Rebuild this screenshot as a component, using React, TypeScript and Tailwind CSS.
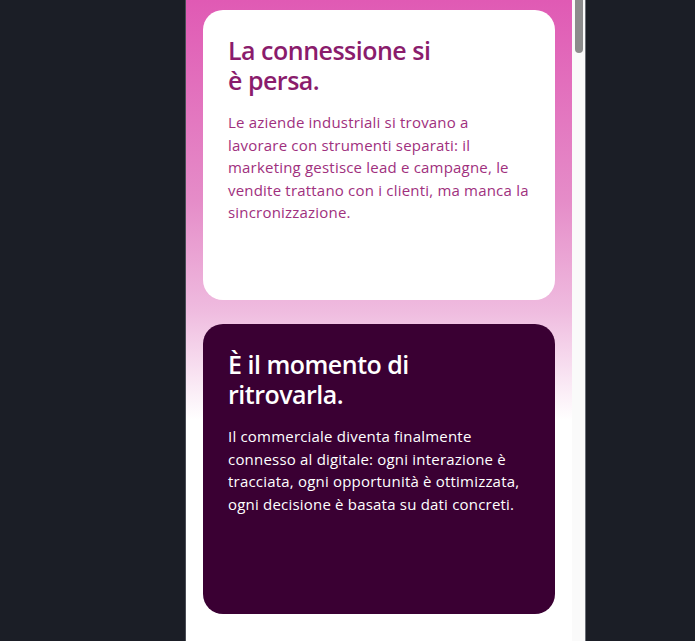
import React from 'react';

const cards = [
  {
    title: ['La connessione si', 'è persa.'],
    body: 'Le aziende industriali si trovano a lavorare con strumenti separati: il marketing gestisce lead e campagne, le vendite trattano con i clienti, ma manca la sincronizzazione.',
    dark: false,
  },
  {
    title: ['È il momento di', 'ritrovarla.'],
    body: 'Il commerciale diventa finalmente connesso al digitale: ogni interazione è tracciata, ogni opportunità è ottimizzata, ogni decisione è basata su dati concreti.',
    dark: true,
  },
];

export default function App() {
  return (
    <div className="h-[641px] w-full bg-[#1b1e26] overflow-hidden font-['Open_Sans',sans-serif]">
      <div className="ml-[185px] w-[401px] h-full flex border-l border-[#4a4d55] border-r border-r-[#6b6e75]">
        {/* page content */}
        <div className="flex-1 flex flex-col gap-[24px] px-[17px] pt-[10px] bg-[linear-gradient(180deg,#e05ab4_0px,#e58cc8_200px,#efbbdf_310px,#ffffff_420px)]">
          {cards.map((c, i) => (
            <div
              key={i}
              className={`h-[290px] shrink-0 rounded-[20px] pl-[25px] pr-[25px] pt-[25px] ${
                c.dark ? 'bg-[#3a0033] text-white' : 'bg-white'
              }`}
            >
              <h2
                className={`text-[25px] leading-[30px] font-semibold tracking-[-0.5px] mb-[16px] ${
                  c.dark ? 'text-white' : 'text-[#8a1c6c]'
                }`}
              >
                {c.title[0]}
                <br />
                {c.title[1]}
              </h2>
              <p
                className={`text-[15px] leading-[22.5px] tracking-[0.2px] ${
                  c.dark ? 'text-white' : 'text-[#a0307e]'
                }`}
              >
                {c.body}
              </p>
            </div>
          ))}
        </div>
        {/* scrollbar */}
        <div className="w-[13px] bg-[#fafafa] flex justify-center">
          <div className="w-[8px] h-[53px] bg-[#8c8c8c] rounded-b-[4px]" />
        </div>
      </div>
    </div>
  );
}
